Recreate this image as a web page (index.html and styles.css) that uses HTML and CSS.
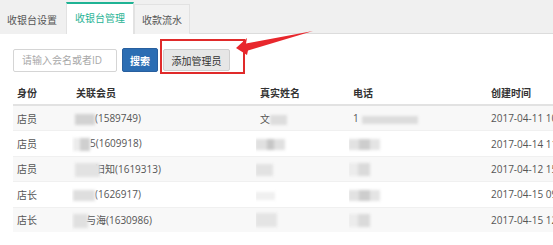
FILE: index.html
```html
<!DOCTYPE html>
<html>
<head>
<meta charset="utf-8">
<link rel="stylesheet" href="styles.css">
</head>
<body>
<div class="page">
  <div class="tabs">
    <div class="tab first">收银台设置</div>
    <div class="tab active">收银台管理</div>
    <div class="tab">收款流水</div>
  </div>
  <div class="content">
    <div class="toolbar">
      <input class="search-input" type="text" placeholder="请输入会名或者ID">
      <button class="btn btn-primary">搜索</button>
      <button class="btn btn-default">添加管理员</button>
    </div>
    <table class="grid">
      <colgroup>
        <col class="c1"><col class="c2"><col class="c3"><col class="c4"><col class="c5">
      </colgroup>
      <thead>
        <tr><th>身份</th><th>关联会员</th><th>真实姓名</th><th>电话</th><th>创建时间</th></tr>
      </thead>
      <tbody>
        <tr class="odd">
          <td>店员</td>
          <td><span class="blur b-m1"></span>(1589749)</td>
          <td>文<span class="blur b-n1"></span></td>
          <td>1<span class="blur b-p1"></span></td>
          <td>2017-04-11 10:21:36</td>
        </tr>
        <tr>
          <td>店员</td>
          <td><span class="blur b-m2"></span>5(1609918)</td>
          <td><span class="blur b-n2"></span></td>
          <td><span class="blur b-p2"></span></td>
          <td>2017-04-14 11:05:12</td>
        </tr>
        <tr class="odd">
          <td>店员</td>
          <td><span class="blur b-m3"></span>旧知(1619313)</td>
          <td><span class="blur b-n3"></span></td>
          <td><span class="blur b-p3"></span></td>
          <td>2017-04-12 15:42:08</td>
        </tr>
        <tr>
          <td>店长</td>
          <td><span class="blur b-m4"></span>(1626917)</td>
          <td><span class="blur b-n4"></span></td>
          <td><span class="blur b-p2"></span></td>
          <td>2017-04-15 09:13:27</td>
        </tr>
        <tr class="odd">
          <td>店长</td>
          <td><span class="blur b-m5"></span>与海(1630986)</td>
          <td><span class="blur b-n5"></span></td>
          <td><span class="blur b-p3"></span></td>
          <td>2017-04-15 12:30:51</td>
        </tr>
      </tbody>
    </table>
  </div>
  <div class="highlight"></div>
  <svg class="arrow" width="553" height="245" viewBox="0 0 553 245">
    <polygon points="236,48 247,38 246,43.5 313,31 248,50.5 247,55" fill="#e8272d"/>
  </svg>
</div>
</body>
</html>
```
FILE: styles.css
```css
html, body {
  margin: 0;
  padding: 0;
  background: #fff;
}
body {
  width: 553px;
  height: 245px;
  overflow: hidden;
  font-family: "Open Sans", "Noto Sans CJK SC", sans-serif;
  font-size: 10px;
  color: #555;
}
.page {
  position: relative;
  width: 553px;
  height: 245px;
  overflow: hidden;
}
.tabs {
  display: flex;
  align-items: flex-end;
  height: 33px;
  background: #f0f0f0;
  border-bottom: 1px solid #dcdcdc;
}
.tab {
  height: 29px;
  line-height: 29px;
  padding: 0 7px;
  border: 1px solid #e2e2e2;
  border-bottom: none;
  background: #f2f2f2;
  color: #555;
  font-family: "Noto Sans CJK SC", sans-serif;
  margin-bottom: -1px;
}
.tab.first {
  border-left: none;
  border-color: transparent;
  background: #f0f0f0;
  padding-left: 7px;
  padding-right: 8px;
}
.tab.active {
  background: #fff;
  color: #1fb394;
  border-top: 2px solid #1fb394;
  height: 29px;
  padding-bottom: 1px;
  line-height: 28px;
  padding-left: 8px;
  padding-right: 8px;
}
.content {
  padding: 14px 0 0 13px;
}
.toolbar {
  display: flex;
  align-items: center;
  gap: 5px;
  height: 24px;
}
.search-input {
  box-sizing: border-box;
  width: 104px;
  height: 23px;
  border: 1px solid #d5d5d5;
  border-radius: 2px;
  padding: 0 8px;
  font-family: "Open Sans", "Noto Sans CJK SC", sans-serif;
  font-size: 10px;
  color: #555;
  outline: none;
}
.search-input::placeholder {
  color: #a8a8a8;
}
.btn {
  box-sizing: border-box;
  font-family: "Noto Sans CJK SC", sans-serif;
  font-size: 10px;
  border-radius: 2px;
  padding: 0;
  cursor: pointer;
}
.btn-primary {
  width: 36px;
  height: 24px;
  background: #2b6db3;
  border: 1px solid #285f9e;
  color: #fff;
  font-weight: bold;
}
.btn-default {
  width: 67px;
  height: 22px;
  background: #e6e6e6;
  border: 1px solid #cfcfcf;
  color: #333;
}
.grid {
  margin-top: 8px;
  width: 700px;
  border-collapse: collapse;
  table-layout: fixed;
}
.c1 { width: 59px; }
.c2 { width: 184px; }
.c3 { width: 93px; }
.c4 { width: 138px; }
.c5 { width: 226px; }
.grid th {
  height: 24px;
  text-align: left;
  padding: 0 4px;
  font-family: "Noto Sans CJK SC", sans-serif;
  font-weight: bold;
  color: #333;
  border-bottom: 2px solid #e2e2e2;
}
.grid td {
  height: 24.4px;
  padding: 0 4px;
  white-space: nowrap;
  overflow: hidden;
  color: #555;
  border-top: 1px solid #f0f0f0;
}
.grid tr.odd td {
  background: #f8f8f8;
}
.blur {
  display: inline-block;
  vertical-align: middle;
  height: 11px;
  background: #d4d4d4;
  filter: blur(1.5px);
  position: relative;
}
.b-m1 { width: 20px; margin-left: -1px; background: #d2d2d2; }
.b-m2 { width: 17px; margin-left: -3px; background: linear-gradient(90deg, #ececec 0 40%, #cfcfcf 40% 100%); height: 13px; }
.b-m3 { width: 25px; margin-left: -1px; margin-right: -5px; height: 14px; background: #e2e2e2; }
.b-m4 { width: 22px; margin-left: -3px; background: #dedede; }
.b-m5 { width: 15px; margin-left: -3px; margin-right: -2px; height: 14px; background: #e0e0e0; }
.b-n1 { width: 17px; height: 10px; background: #dddddd; }
.b-n2 { width: 30px; margin-left: -5px; background: linear-gradient(90deg, #e0e0e0 0 40%, #c6c6c6 40% 65%, #e0e0e0 65% 100%); }
.b-n3 { width: 18px; margin-left: -5px; height: 12px; background: #e2e2e2; }
.b-n4 { width: 20px; margin-left: -5px; height: 8px; background: #f0f0f0; }
.b-n5 { width: 22px; margin-left: -5px; height: 14px; background: #e4e4e4; }
.b-p1 { width: 56px; height: 8px; margin-left: 3px; background: #dcdcdc; }
.b-p2 { width: 32px; margin-left: -5px; background: linear-gradient(90deg, #e2e2e2 0 35%, #cdcdcd 35% 70%, #e4e4e4 70% 100%); }
.b-p3 { width: 22px; margin-left: -5px; height: 13px; background: linear-gradient(90deg, #ececec 0 45%, #dadada 45% 100%); }
.highlight {
  position: absolute;
  left: 160px;
  top: 39px;
  width: 81px;
  height: 31px;
  border: 2px solid #e02a2a;
}
.arrow {
  position: absolute;
  left: 0;
  top: 0;
  pointer-events: none;
}
```
